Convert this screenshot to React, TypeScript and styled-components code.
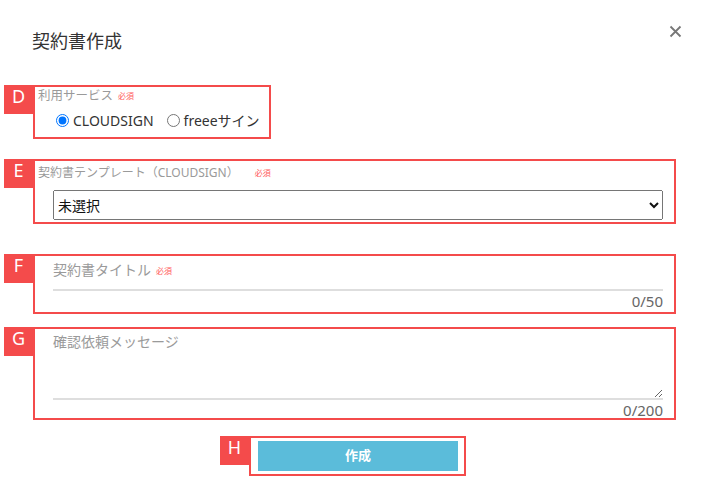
import styled, { createGlobalStyle } from 'styled-components';

const GlobalStyle = createGlobalStyle`
  body {
    margin: 0;
    background: #fff;
    font-family: "Noto Sans", "Noto Sans CJK JP", sans-serif;
    color: #333;
  }
`;

const Dialog = styled.div`
  width: 704px;
  height: 498px;
  box-sizing: border-box;
  background: #fff;
`;

const Header = styled.div`
  display: flex;
  justify-content: space-between;
  align-items: flex-start;
  padding: 25px 22px 0 32px;
`;

const Title = styled.h2`
  margin: 4px 0 0;
  font-size: 18px;
  line-height: 24px;
  font-weight: 400;
  color: #333;
`;

const CloseBtn = styled.button`
  border: none;
  background: transparent;
  padding: 0;
  width: 13px;
  height: 13px;
  cursor: pointer;
  display: flex;
`;

const Form = styled.form`
  display: flex;
  flex-direction: column;
  align-items: flex-start;
  padding-left: 33px;
  width: 643px;
`;

const Field = styled.div<{ $top: number; $width?: number; $pad: string }>`
  position: relative;
  box-sizing: border-box;
  margin-top: ${({ $top }) => $top}px;
  width: ${({ $width }) => ($width ? `${$width}px` : '100%')};
  border: 2px solid #f44b4b;
  padding: ${({ $pad }) => $pad};
`;

const Tag = styled.span`
  position: absolute;
  left: -31px;
  top: -2px;
  width: 29px;
  height: 29px;
  background: #f44b4b;
  color: #fff;
  font-size: 18px;
  line-height: 23px;
  text-align: center;
`;

const SmallLabel = styled.div<{ $size?: number }>`
  font-size: ${({ $size }) => $size ?? 12}px;
  line-height: 16px;
  color: #9a9a9a;
  white-space: nowrap;
`;

const Required = styled.span<{ $gap?: number }>`
  margin-left: ${({ $gap }) => $gap ?? 5}px;
  font-size: 8px;
  color: #ff5a5a;
  vertical-align: 1px;
`;

const RadioRow = styled.div`
  display: flex;
  align-items: center;
  margin-top: 6px;
  padding-left: 18px;
  height: 20px;
  font-size: 14px;
  color: #333;
`;

const RadioLabel = styled.label`
  display: flex;
  align-items: center;
  gap: 4px;
  margin-right: 13px;
  white-space: nowrap;

  input {
    margin: 0;
    width: 13px;
    height: 13px;
  }
`;

const Select = styled.select`
  display: block;
  margin: 9px 0 0 15px;
  width: calc(100% - 15px);
  height: 30px;
  font-family: "Noto Sans", "Noto Sans CJK JP", sans-serif;
  font-size: 14px;
  color: #111;
`;

const InputWrap = styled.div`
  position: relative;
`;

const FloatLabel = styled.label`
  position: absolute;
  left: 0;
  top: 0;
  font-size: 14px;
  line-height: 20px;
  color: #9a9a9a;
  pointer-events: none;
`;

const TextInput = styled.input`
  display: block;
  box-sizing: border-box;
  width: 100%;
  height: 31px;
  border: none;
  border-bottom: 2px solid #dedede;
  padding: 0;
  outline: none;
  background: transparent;
`;

const TextArea = styled.textarea`
  display: block;
  box-sizing: border-box;
  width: 100%;
  height: 68px;
  border: none;
  border-bottom: 2px solid #dedede;
  padding: 20px 0 0;
  outline: none;
  resize: vertical;
  background: transparent;
`;

const Counter = styled.div`
  margin-top: 2px;
  text-align: right;
  font-size: 15px;
  line-height: 16px;
  color: #666;
`;

const SubmitWrap = styled.div`
  position: relative;
  box-sizing: border-box;
  margin: 16px 0 0 216px;
  border: 2px solid #f44b4b;
  padding: 3px 6px 3px 7px;
`;

const SubmitBtn = styled.button`
  display: block;
  width: 200px;
  height: 30px;
  border: none;
  background: #5bbcda;
  color: #fff;
  font-family: "Noto Sans", "Noto Sans CJK JP", sans-serif;
  font-size: 13px;
  font-weight: 700;
  padding: 0 0 4px;
  cursor: pointer;
`;

export default function App() {
  return (
    <Dialog>
      <GlobalStyle />
      <Header>
        <Title>契約書作成</Title>
        <CloseBtn type="button" aria-label="閉じる">
          <svg width="13" height="13" viewBox="0 0 13 13">
            <path d="M1.5 1.5 L11.5 11.5 M11.5 1.5 L1.5 11.5" stroke="#777" strokeWidth="1.8" />
          </svg>
        </CloseBtn>
      </Header>
      <Form onSubmit={(e) => e.preventDefault()}>
        <Field $top={32} $width={238} $pad="1px 8px 7px 3px">
          <Tag>D</Tag>
          <SmallLabel $size={12.5}>
            利用サービス<Required>必須</Required>
          </SmallLabel>
          <RadioRow>
            <RadioLabel>
              <input type="radio" name="service" defaultChecked />
              CLOUDSIGN
            </RadioLabel>
            <RadioLabel>
              <input type="radio" name="service" />
              freeeサイン
            </RadioLabel>
          </RadioRow>
        </Field>

        <Field $top={20} $pad="4px 11px 2px 3px">
          <Tag>E</Tag>
          <SmallLabel>
            契約書テンプレート（CLOUDSIGN）<Required $gap={16}>必須</Required>
          </SmallLabel>
          <Select defaultValue="">
            <option value="">未選択</option>
          </Select>
        </Field>

        <Field $top={30} $pad="4px 11px 3px 18px">
          <Tag>F</Tag>
          <InputWrap>
            <FloatLabel>
              契約書タイトル<Required>必須</Required>
            </FloatLabel>
            <TextInput type="text" maxLength={50} />
          </InputWrap>
          <Counter>0/50</Counter>
        </Field>

        <Field $top={13} $pad="3px 11px 0 18px">
          <Tag>G</Tag>
          <InputWrap>
            <FloatLabel>確認依頼メッセージ</FloatLabel>
            <TextArea maxLength={200} />
          </InputWrap>
          <Counter>0/200</Counter>
        </Field>

        <SubmitWrap>
          <Tag>H</Tag>
          <SubmitBtn type="submit">作成</SubmitBtn>
        </SubmitWrap>
      </Form>
    </Dialog>
  );
}
